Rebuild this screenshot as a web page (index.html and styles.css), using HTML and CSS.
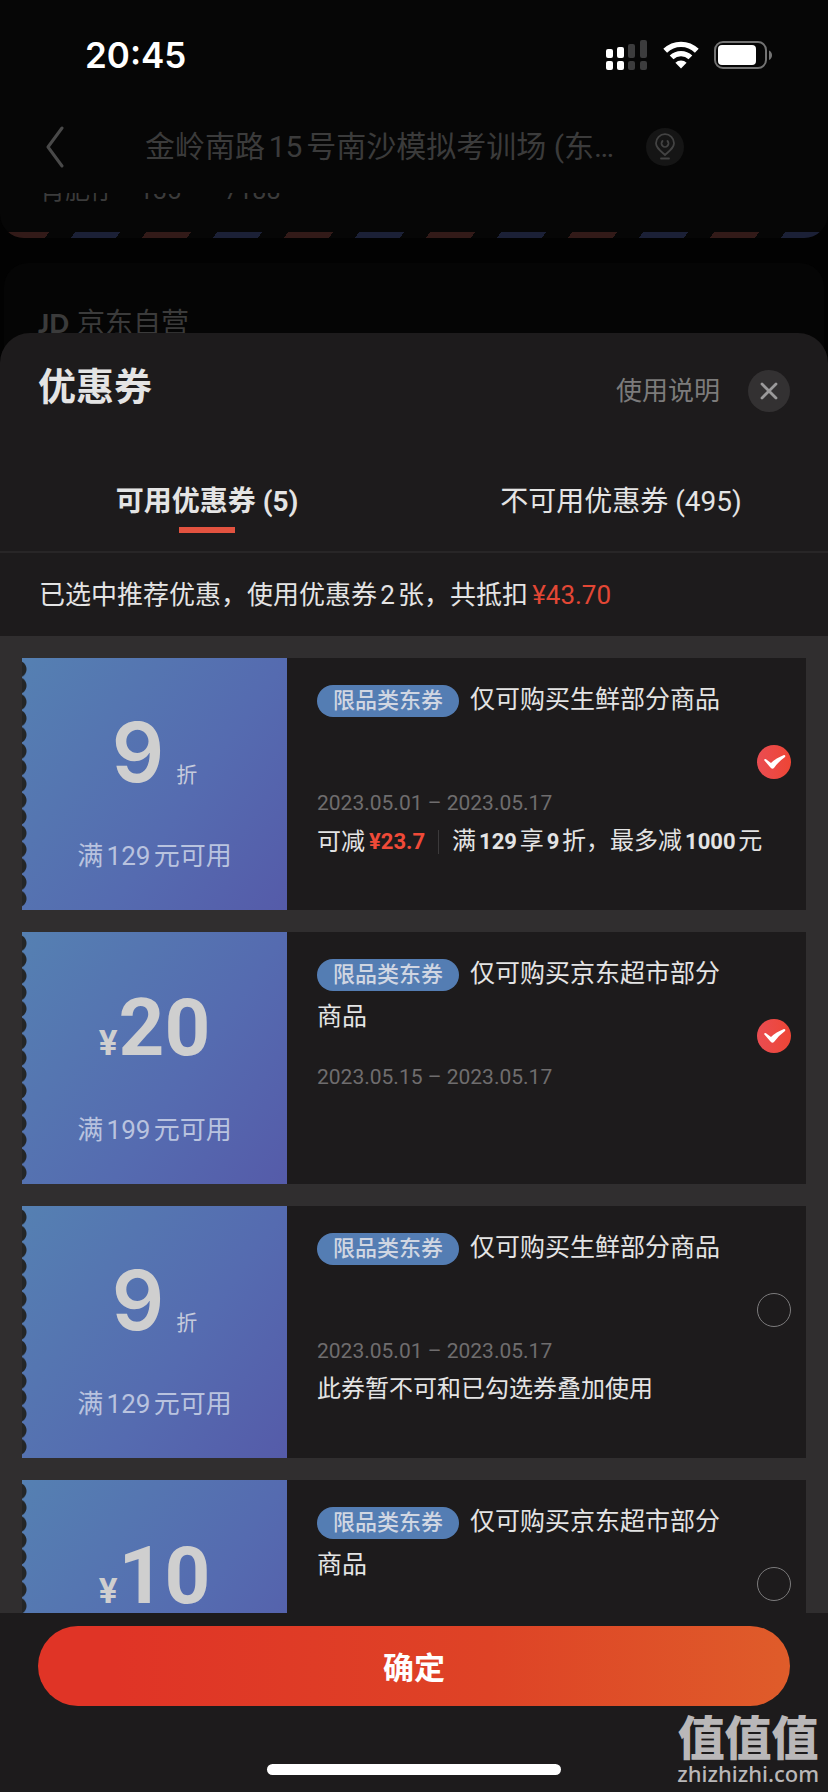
FILE: index.html
```
<!DOCTYPE html>
<html lang="zh-CN">
<head>
<meta charset="utf-8">
<meta name="viewport" content="width=device-width, initial-scale=1">
<title>优惠券</title>
<link rel="stylesheet" href="styles.css">
</head>
<body>
<div class="screen">
  <div class="backdrop">
    <div class="status">
      <span class="time">20:45</span>
      <div class="status-icons">
        <svg width="42" height="30" viewBox="0 0 42 30" aria-hidden="true">
          <g fill="#fff"><rect x="0" y="9" width="7" height="9" rx="2"/><rect x="0" y="21" width="7" height="9" rx="2"/><rect x="11" y="7" width="7" height="11" rx="2"/><rect x="11" y="21" width="7" height="9" rx="2"/></g>
          <g fill="#3c3c3d"><rect x="22" y="4" width="7" height="14" rx="2"/><rect x="22" y="21" width="7" height="9" rx="2"/><rect x="34" y="0" width="7" height="18" rx="2"/><rect x="34" y="21" width="7" height="9" rx="2"/></g>
        </svg>
        <svg width="36" height="28" viewBox="0 0 36 28" aria-hidden="true">
          <g fill="none" stroke="#fff" stroke-width="5.4"><path d="M2.2 9.8a22.6 22.6 0 0 1 31.6 0"/><path d="M8.6 16.4a13.6 13.6 0 0 1 18.8 0"/></g>
          <path d="M18 27.5l-5.6-5.8a8 8 0 0 1 11.2 0z" fill="#fff"/>
        </svg>
        <svg width="60" height="28" viewBox="0 0 60 28" aria-hidden="true">
          <rect x="1" y="1" width="51" height="26" rx="8" fill="none" stroke="#737373" stroke-width="2"/>
          <rect x="4" y="4" width="38" height="20" rx="4" fill="#fff"/>
          <path d="M55 9.500c4 1.500 4 8 0 9.500z" fill="#737373"/>
        </svg>
      </div>
    </div>
    <div class="nav">
      <button class="back" type="button" aria-label="返回">
        <svg width="20" height="42" viewBox="0 0 20 42"><path d="M17 2L3 21l14 19" fill="none" stroke="#494949" stroke-width="3" stroke-linecap="round" stroke-linejoin="round"/></svg>
      </button>
      <span class="nav-title">金岭南路15号南沙模拟考训场 (东…</span>
      <span class="pin">
        <svg width="24" height="28" viewBox="0 0 24 28"><g fill="none" stroke="#434343" stroke-width="1.800" stroke-linecap="round"><path d="M12 22C7 17.500 3 14.500 3 10.200a9 9 0 0 1 18 0C21 14.500 17 17.500 12 22z"/><path d="M9.500 8a3.500 3.500 0 1 0 5 0"/><path d="M8 25.500h8"/></g></svg>
      </span>
    </div>
    <div class="address">
      <div class="contact"><span>肖肥仔</span><span>135<i>****</i>7188</span></div>
      <div class="airmail"></div>
    </div>
    <div class="shop"><b>JD</b><span>京东自营</span></div>
  </div>

  <section class="sheet">
    <header class="sheet-head">
      <h1>优惠券</h1>
      <button class="help" type="button">使用说明</button>
      <button class="close" type="button" aria-label="关闭">
        <svg width="18" height="18" viewBox="0 0 18 18"><path d="M2 2l14 14M16 2L2 16" stroke="#9b9a9b" stroke-width="2.800" stroke-linecap="round"/></svg>
      </button>
    </header>
    <nav class="tabs">
      <button class="tab active" type="button">可用优惠券 (5)</button>
      <button class="tab" type="button">不可用优惠券 (495)</button>
    </nav>
    <p class="summary">已选中推荐优惠，使用优惠券2张，共抵扣<span class="red">¥43.70</span></p>

    <div class="list">
      <article class="coupon">
        <div class="value">
          <p class="amount"><span class="rate">9</span><span class="unit">折</span></p>
          <p class="cond">满129元可用</p>
        </div>
        <div class="info">
          <div class="main">
            <div class="text">
              <h2 id="c1"><span class="tag">限品类东券</span>仅可购买生鲜部分商品</h2>
              <p class="date">2023.05.01 – 2023.05.17</p>
            </div>
            <input class="pick" type="checkbox" aria-labelledby="c1" checked>
          </div>
          <p class="detail"><span class="off">可减<b class="red">¥23.7</b></span><span>满<b>129</b>享<b>9</b>折，最多减<b>1000</b>元</span></p>
        </div>
      </article>
      <article class="coupon">
        <div class="value">
          <p class="amount"><span class="yen">¥</span><span class="num">20</span></p>
          <p class="cond">满199元可用</p>
        </div>
        <div class="info">
          <div class="main">
            <div class="text">
              <h2 id="c2"><span class="tag">限品类东券</span>仅可购买京东超市部分商品</h2>
              <p class="date">2023.05.15 – 2023.05.17</p>
            </div>
            <input class="pick" type="checkbox" aria-labelledby="c2" checked>
          </div>
        </div>
      </article>
      <article class="coupon">
        <div class="value">
          <p class="amount"><span class="rate">9</span><span class="unit">折</span></p>
          <p class="cond">满129元可用</p>
        </div>
        <div class="info">
          <div class="main">
            <div class="text">
              <h2 id="c3"><span class="tag">限品类东券</span>仅可购买生鲜部分商品</h2>
              <p class="date">2023.05.01 – 2023.05.17</p>
            </div>
            <input class="pick" type="checkbox" aria-labelledby="c3">
          </div>
          <p class="detail">此券暂不可和已勾选券叠加使用</p>
        </div>
      </article>
      <article class="coupon">
        <div class="value">
          <p class="amount"><span class="yen">¥</span><span class="num">10</span></p>
        </div>
        <div class="info">
          <div class="main">
            <div class="text">
              <h2 id="c4"><span class="tag">限品类东券</span>仅可购买京东超市部分商品</h2>
            </div>
            <input class="pick" type="checkbox" aria-labelledby="c4">
          </div>
        </div>
      </article>
    </div>

    <footer class="footer">
      <button class="confirm" type="button">确定</button>
      <div class="home"></div>
    </footer>
  </section>

  <div class="mark"><strong>值值值</strong><span>zhizhizhi.com</span></div>
</div>
</body>
</html>
```
FILE: styles.css
```
* { box-sizing: border-box; }
body, h1, h2, p { margin: 0; }
body {
  background: #020202;
  color: #e4e4e4;
  font-family: Roboto, "Noto Sans CJK SC", sans-serif;
}
button {
  padding: 0;
  border: 0;
  background: none;
  color: inherit;
  font: inherit;
}
.screen {
  position: relative;
  display: flex;
  flex-direction: column;
  height: 100vh;
  overflow: hidden;
  text-autospace: normal;
}

/* page behind the sheet */
.backdrop { flex: none; color: #3b3b3b; }
.status {
  display: flex;
  justify-content: space-between;
  align-items: center;
  height: 110px;
  padding: 0 54px 0 85px;
  background: #060606;
}
.time { color: #fff; font: 600 35px/44px Inter, sans-serif; }
.status-icons { display: flex; align-items: center; gap: 15px; }
.nav {
  display: flex;
  align-items: center;
  height: 74px;
  padding: 0 45px;
  background: #060606;
}
.back { display: flex; margin-right: 80px; }
.nav-title { font-size: 30px; line-height: 40px; white-space: nowrap; }
.pin {
  display: flex;
  justify-content: center;
  align-items: center;
  width: 38px;
  height: 38px;
  margin-left: 32px;
  border-radius: 50%;
  background: #151515;
}
.address {
  padding-top: 9px;
  background: #060606;
  border-radius: 0 0 24px 24px;
  overflow: hidden;
}
.contact {
  display: flex;
  align-items: flex-end;
  gap: 24px;
  height: 14px;
  padding-left: 40px;
  overflow: hidden;
  font-size: 25px;
  line-height: 32px;
}
.contact i { font-style: normal; color: #141414; }
.airmail {
  height: 6px;
  margin: 25px 8px 0;
  overflow: hidden;
  border-radius: 0 0 12px 12px;
}
.airmail::before {
  content: "";
  display: block;
  height: 6px;
  margin: 0 -10px;
  background: repeating-linear-gradient(90deg, transparent 0 4px, #321a18 4px 49px, transparent 49px 75px, #1b2036 75px 120px, transparent 120px 142px);
  transform: skewX(-38deg);
}
.shop {
  display: flex;
  gap: 8px;
  height: 100px;
  margin: 25px 4px 0;
  padding: 41px 34px 0;
  border-radius: 24px 24px 0 0;
  background: #050505;
  font-size: 28px;
  line-height: 40px;
}
.shop b { font: 900 26px/38px Lato, sans-serif; }

/* coupon sheet */
.sheet {
  display: flex;
  flex: 1;
  flex-direction: column;
  min-height: 0;
  margin-top: -30px;
  border-radius: 30px 30px 0 0;
  background: #1d1b1c;
  overflow: hidden;
  position: relative;
}
.sheet-head {
  display: flex;
  align-items: center;
  height: 116px;
  padding: 0 38px;
}
h1 { margin: 0 auto 8px 0; font-size: 38px; line-height: 52px; font-weight: 700; }
.help { color: #7c7b7b; font-size: 26px; line-height: 36px; }
.close {
  display: flex;
  justify-content: center;
  align-items: center;
  width: 42px;
  height: 42px;
  margin-left: 28px;
  border-radius: 50%;
  background: #333132;
}
.tabs {
  display: flex;
  height: 104px;
  padding-top: 33px;
  border-bottom: 2px solid #282627;
}
.tab {
  display: flex;
  flex: 1;
  flex-direction: column;
  align-items: center;
  gap: 5px;
  font-size: 28px;
  line-height: 40px;
}
.active { font-weight: 700; }
.active::after { content: ""; width: 56px; height: 6px; background: #e2523f; }
.summary {
  height: 83px;
  padding-left: 39px;
  font-size: 26px;
  line-height: 84px;
  white-space: nowrap;
}
.red { color: #e34735; }
.summary .red { margin-left: 4px; }

.list {
  display: flex;
  flex: 1;
  flex-direction: column;
  gap: 22px;
  min-height: 0;
  padding: 22px 22px 0;
  background: #302e2f;
  overflow: hidden;
}
.coupon {
  display: flex;
  flex: none;
  height: 252px;
  background: #1d1b1c;
}
.value {
  position: relative;
  display: flex;
  flex: none;
  flex-direction: column;
  align-items: center;
  width: 265px;
  padding-top: 44px;
  background: linear-gradient(125deg, #5580b2 0%, #556bb0 60%, #555ba9 100%);
}
/* perforated edge */
.value::before {
  content: "";
  position: absolute;
  inset: 3px auto 3px 0;
  width: 5px;
  background: radial-gradient(circle at -4px 50%, #242627 8px, transparent 9px) 0 0 / 5px 16px;
  background-repeat: no-repeat round;
}
.amount {
  display: flex;
  align-items: baseline;
  height: 134px;
  color: #cfcfcf;
  line-height: 104px;
}
.rate { font: 600 82px/102px Inter, sans-serif; }
.unit { margin-left: 12px; font-size: 21px; color: #c5cbdc; }
.yen { margin-right: 1px; font: 700 35px/104px Roboto, sans-serif; }
.num { font: 700 80px/104px Roboto, sans-serif; }
.cond { color: #b9c3df; font-size: 26px; line-height: 40px; }
.info { flex: 1; min-width: 0; padding: 20px 15px 0 30px; }
.main { display: flex; gap: 16px; }
.text { flex: 1; }
h2 { min-height: 86px; font-size: 25px; line-height: 43px; font-weight: 400; }
.tag {
  display: inline-block;
  margin-right: 11px;
  padding: 0 16px;
  border-radius: 16px;
  background: #547db3;
  color: #d0d6e2;
  font-size: 22px;
  line-height: 32px;
  font-weight: 500;
}
.date {
  margin-top: 20px;
  color: #6f6d6e;
  font-size: 21px;
  line-height: 38px;
}
.pick {
  flex: none;
  appearance: none;
  width: 34px;
  height: 34px;
  margin: 67px 0 0;
  border: 1px solid #7c7b7c;
  border-radius: 50%;
}
.pick:checked { border: 0; background: linear-gradient(90deg, #ea4d52, #ee4535); }
.pick:checked::before {
  content: "";
  display: block;
  width: 34px;
  height: 34px;
  background: #fff;
  clip-path: path("M7 15 Q8 13 10 15 L14 18 Q19 13 27 10 Q29 10 28 12 Q21 17 17 23 Q15 25 13 22 Z");
}
.detail {
  display: flex;
  font-size: 24px;
  line-height: 38px;
  white-space: nowrap;
}
.detail b { font-size: 22px; font-weight: 700; }
.off { display: flex; align-items: center; }
.off b { margin-left: 4px; color: #f04a38; }
.off::after { content: ""; width: 1px; height: 24px; margin: 0 13px; background: #3c3a3b; }

.footer {
  display: flex;
  flex: none;
  flex-direction: column;
  align-items: center;
  gap: 58px;
  padding: 13px 38px 17px;
}
.confirm {
  width: 100%;
  height: 80px;
  border-radius: 40px;
  background: linear-gradient(90deg, #e03426 10%, #de4326 60%, #df5c2a);
  color: #fff;
  font: 700 31px/44px "Noto Sans CJK SC", sans-serif;
}
.home { width: 294px; height: 11px; border-radius: 6px; background: #fff; }

.mark {
  position: absolute;
  right: 9px;
  bottom: 5px;
  display: flex;
  flex-direction: column;
  align-items: center;
  color: #b9b7b8;
}
.mark strong { font: 900 47px/48px "Noto Sans CJK SC", sans-serif; }
.mark span { font: 500 22px/28px "Noto Sans", sans-serif; }
```
